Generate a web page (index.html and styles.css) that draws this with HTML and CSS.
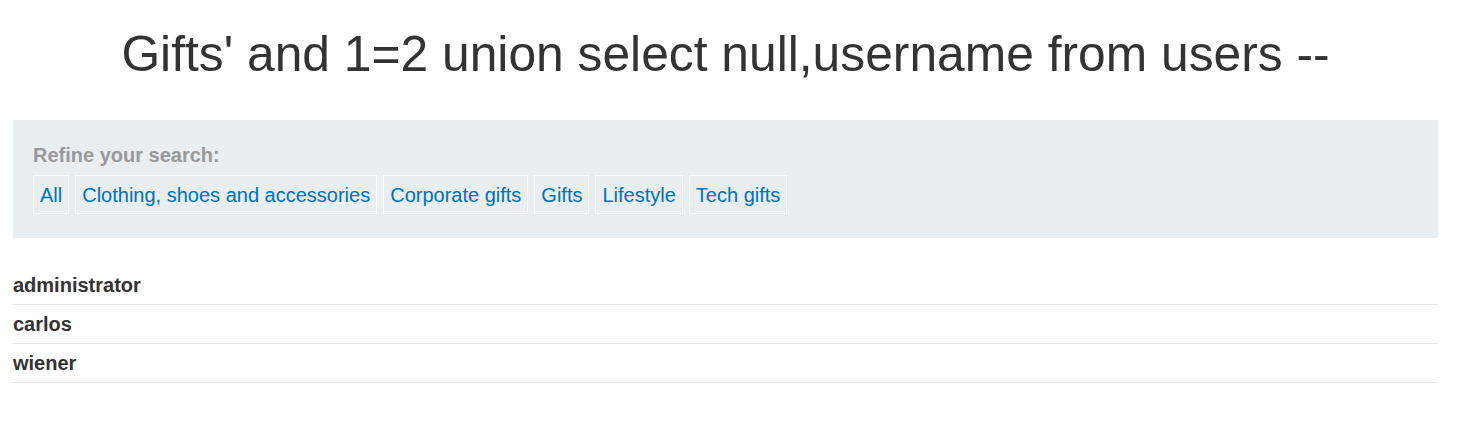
FILE: index.html
```html
<!DOCTYPE html>
<html>
<head>
<meta charset="utf-8">
<link rel="stylesheet" href="styles.css">
</head>
<body>
<div class="page">
  <h1 class="title">Gifts' and 1=2 union select null,username from users --</h1>
  <section class="filters">
    <p class="filters-label">Refine your search:</p>
    <div class="filter-list">
      <a class="filter" href="#">All</a>
      <a class="filter" href="#">Clothing, shoes and accessories</a>
      <a class="filter" href="#">Corporate gifts</a>
      <a class="filter" href="#">Gifts</a>
      <a class="filter" href="#">Lifestyle</a>
      <a class="filter" href="#">Tech gifts</a>
    </div>
  </section>
  <table class="results">
    <tbody>
      <tr><th>administrator</th></tr>
      <tr><th>carlos</th></tr>
      <tr><th>wiener</th></tr>
    </tbody>
  </table>
</div>
</body>
</html>
```

FILE: styles.css
```css
html, body {
  margin: 0;
  padding: 0;
  background: #fff;
}
body {
  font-family: "Liberation Sans", Arial, sans-serif;
  color: #333332;
}
.page {
  padding: 0 21px 0 13px;
}
.title {
  margin: 0;
  padding-top: 24px;
  height: 120px;
  box-sizing: border-box;
  font-size: 49.75px;
  font-weight: normal;
  line-height: 60px;
  text-align: center;
  color: #333332;
}
.filters {
  background: #e9eef1;
  padding: 24px 20px 24px 20px;
}
.filters-label {
  margin: 0 0 9px 0;
  font-size: 20px;
  font-weight: bold;
  color: #999999;
  line-height: 22px;
}
.filter-list {
  display: flex;
  gap: 6px;
}
.filter {
  display: block;
  border: 1px solid #ffffff;
  padding: 0 6px;
  height: 37px;
  line-height: 38px;
  font-size: 20px;
  color: #0071bc;
  text-decoration: none;
}
.results {
  width: 100%;
  border-collapse: collapse;
  margin-top: 28px;
}
.results th {
  text-align: left;
  font-size: 20px;
  font-weight: bold;
  padding: 0;
  height: 38px;
  border-bottom: 1px solid #e6e6e6;
  color: #333332;
}
```
